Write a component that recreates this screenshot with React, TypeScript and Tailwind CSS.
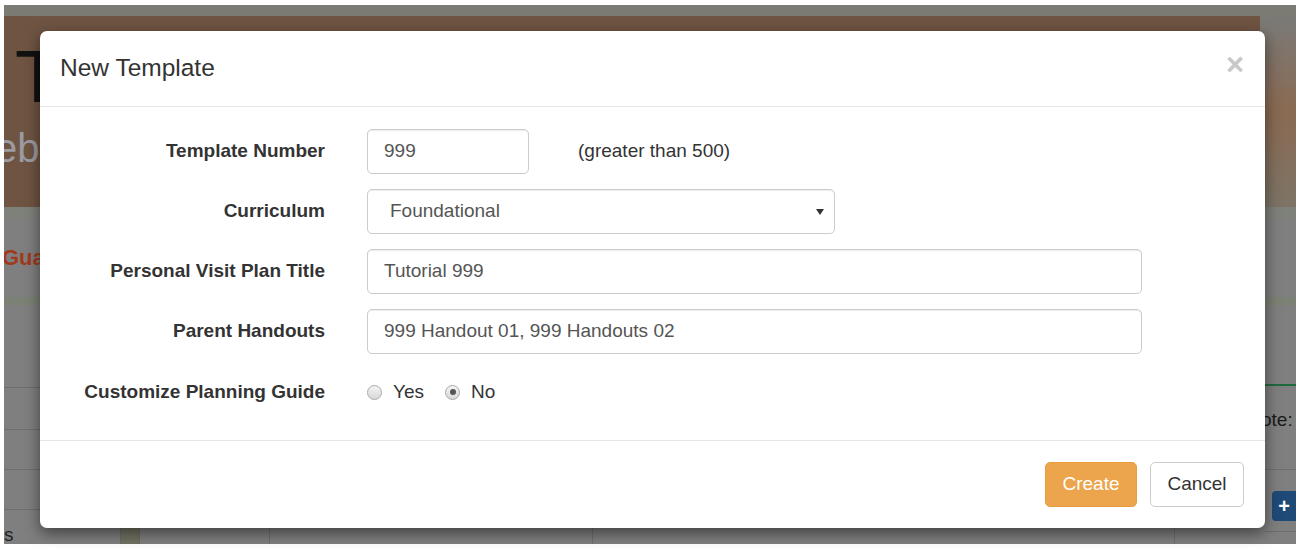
import React from "react";

const font = { fontFamily: '"Liberation Sans", Arial, sans-serif' };

const Radio: React.FC<{ checked?: boolean; label: string }> = ({ checked, label }) => (
  <label className="flex items-center">
    <span className="w-[15px] h-[15px] rounded-full border border-[#a9a9a9] bg-gradient-to-b from-[#f4f4f4] to-[#d8d8d8] flex items-center justify-center">
      {checked && <span className="w-[6px] h-[6px] rounded-full bg-[#555]" />}
    </span>
    <span className="ml-[11px] text-[#333]">{label}</span>
  </label>
);

const FormRow: React.FC<{ label: string; children: React.ReactNode; tall?: boolean }> = ({
  label,
  children,
  tall,
}) => (
  <div className={`flex items-center ${tall ? "h-[46px]" : "h-[45px]"}`}>
    <div className="w-[285px] text-right font-bold text-[#333]">{label}</div>
    <div className="ml-[42px] flex items-center flex-1">{children}</div>
  </div>
);

const inputCls =
  "h-[45px] rounded-[5px] border border-[#ccc] bg-white px-[16px] flex items-center text-[#555] shadow-[inset_0_1px_1px_rgba(0,0,0,0.075)]";

const Background: React.FC = () => (
  <div className="absolute inset-0 bg-white pt-[5px] pl-[4px] pb-[5px]">
    <div className="h-full bg-[#7f7f7f] flex flex-col overflow-hidden">
      <div className="h-[11px] bg-[#7b7b74]" />
      <div className="h-[191px] flex">
        <div className="w-[1256px] bg-[#6f5442] flex flex-col pl-[11px]">
          <div className="text-[74px] leading-none text-[#111] mt-[24px]">T</div>
          <div className="text-[40px] leading-none text-[#9b9ba3] -ml-[20px] mt-[14px]">eb</div>
        </div>
        <div className="flex-1 bg-gradient-to-b from-[#7a7a78] via-[#8a6a52] to-[#7d7466]" />
      </div>
      <div className="h-[11px] bg-[#7e8179]" />
      <div className="h-[79px] flex items-center">
        <span className="text-[22px] font-bold text-[#a13a1c] -ml-[2px]">Gua</span>
      </div>
      <div className="h-[8px] bg-[#7b8174]" />
      <div className="flex-1 flex">
        <div className="flex-1 flex flex-col">
          <div className="h-[83px] border-b border-[#6e6e6e]" />
          <div className="h-[42px] border-b border-[#6e6e6e]" />
          <div className="h-[40px] border-b border-[#6e6e6e]" />
          <div className="h-[40px] border-b border-[#6e6e6e]" />
          <div className="flex-1 flex">
            <div className="w-[116px] flex items-end">
              <span className="text-[19px] text-[#222] leading-none">s</span>
            </div>
            <div className="w-[20px] bg-[#727262] border-x border-[#6a6a6a]" />
            <div className="w-[130px] border-r border-[#6e6e6e]" />
            <div className="w-[323px] border-r border-[#6e6e6e]" />
            <div className="w-[582px] border-r border-[#6e6e6e]" />
          </div>
        </div>
        <div className="w-[31px] flex flex-col">
          <div className="h-[81px] border-b-2 border-[#1f6a3c]" />
          <div className="h-[84px] border-b border-[#6e6e6e] flex items-start pt-[24px]">
            <span className="text-[19px] text-[#1a1a1a] -ml-[4px] leading-none">ote:</span>
          </div>
          <div className="h-[21px]" />
          <div className="h-[30px] flex justify-end">
            <div className="w-[24px] h-[30px] bg-[#1f4a77] rounded-l-[4px] flex items-center justify-center text-white font-bold text-[20px]">
              +
            </div>
          </div>
          <div className="flex-1 border-t border-[#6e6e6e] mt-[10px]" />
        </div>
      </div>
    </div>
  </div>
);

const App: React.FC = () => {
  return (
    <div className="relative w-[1296px] h-[549px] overflow-hidden text-[19px]" style={font}>
      <Background />
      <div className="absolute left-[40px] top-[31px] w-[1225px] h-[497px] bg-white rounded-[7px] shadow-[0_5px_15px_rgba(0,0,0,0.5)] flex flex-col">
        <div className="h-[76px] border-b border-[#e5e5e5] flex items-center justify-between pl-[20px] pr-[21px]">
          <h4 className="text-[24.5px] text-[#333]">New Template</h4>
          <span className="text-[31px] font-bold text-[#c8c8c8] leading-none -mt-[8px]">×</span>
        </div>
        <div className="flex-1 pt-[22px] flex flex-col gap-[15px]">
          <FormRow label="Template Number">
            <div className={`${inputCls} w-[162px]`}>999</div>
            <span className="ml-[49px] text-[#333]">(greater than 500)</span>
          </FormRow>
          <FormRow label="Curriculum">
            <div className={`${inputCls} w-[468px] justify-between pl-[22px] pr-[10px] text-[#333]`}>
              <span>Foundational</span>
              <svg width="8" height="6" viewBox="0 0 8 6">
                <path d="M0 0h8L4 6z" fill="#333" />
              </svg>
            </div>
          </FormRow>
          <FormRow label="Personal Visit Plan Title">
            <div className={`${inputCls} w-[775px]`}>Tutorial 999</div>
          </FormRow>
          <FormRow label="Parent Handouts">
            <div className={`${inputCls} w-[775px]`}>999 Handout 01, 999 Handouts 02</div>
          </FormRow>
          <FormRow label="Customize Planning Guide" tall>
            <div className="flex items-center gap-[21px]">
              <Radio label="Yes" />
              <Radio label="No" checked />
            </div>
          </FormRow>
        </div>
        <div className="h-[88px] border-t border-[#e5e5e5] flex items-center justify-end gap-[13px] pr-[21px]">
          <button className="h-[45px] w-[92px] rounded-[5px] bg-[#eca54c] border border-[#e89c3c] text-white">
            Create
          </button>
          <button className="h-[45px] w-[94px] rounded-[5px] bg-white border border-[#ccc] text-[#333]">
            Cancel
          </button>
        </div>
      </div>
    </div>
  );
};

export default App;
